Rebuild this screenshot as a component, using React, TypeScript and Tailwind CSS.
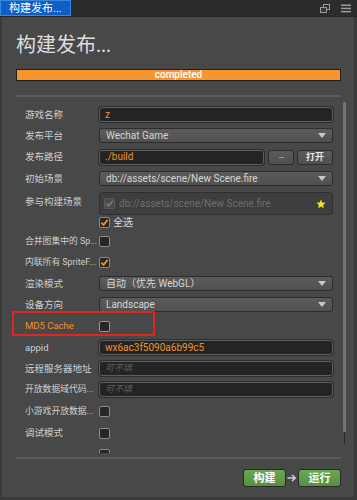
import React from "react";

const font = { fontFamily: 'Roboto, "Noto Sans CJK SC", sans-serif' };

function Label({ children, orange, small }: { children: React.ReactNode; orange?: boolean; small?: boolean }) {
  return (
    <div
      className={`w-[74px] shrink-0 whitespace-nowrap leading-none ${small ? "text-[8.8px]" : "text-[9.5px]"} ${
        orange ? "text-[#f0922a]" : "text-[#cfcfcf]"
      }`}
    >
      {children}
    </div>
  );
}

function TextInput({ value, placeholder, className = "" }: { value?: string; placeholder?: string; className?: string }) {
  return (
    <div
      className={`h-[15px] rounded-[3px] border border-[#5e5e5e] bg-[#242424] shadow-[0_0_0_1px_#2e2e2e] flex items-center px-[5px] text-[10px] leading-none ${className}`}
    >
      {value ? (
        <span className="text-[#f0922a]">{value}</span>
      ) : (
        <span className="text-[#5f5f5f] italic text-[9px]">{placeholder}</span>
      )}
    </div>
  );
}

function Select({ value }: { value: string }) {
  return (
    <div className="h-[15px] w-[234px] rounded-[3px] border border-[#2c2c2c] bg-gradient-to-b from-[#5b5b5b] to-[#505050] flex items-center justify-between pl-[6px] pr-[6px] text-[10px] leading-none text-[#d6d6d6]">
      <span>{value}</span>
      <span className="w-0 h-0 border-l-[4px] border-r-[4px] border-t-[5px] border-l-transparent border-r-transparent border-t-[#c8c8c8]" />
    </div>
  );
}

function Check({ checked, disabled }: { checked?: boolean; disabled?: boolean }) {
  return (
    <div
      className={`w-[11px] h-[11px] rounded-[2px] border flex items-center justify-center ${
        disabled ? "border-[#5a5a5a] bg-[#4a4a4a]" : "border-[#8a8a8a] bg-[#262626]"
      }`}
    >
      {checked && (
        <svg width="9" height="9" viewBox="0 0 10 10">
          <path
            d="M1.5 5.2 L4 7.6 L8.6 2"
            fill="none"
            stroke={disabled ? "#7a7a7a" : "#f0922a"}
            strokeWidth="2"
          />
        </svg>
      )}
    </div>
  );
}

function Row({ h, children }: { h: string; children: React.ReactNode }) {
  return <div className={`${h} flex items-center shrink-0`}>{children}</div>;
}

export default function App() {
  return (
    <div className="w-[357px] h-[500px] bg-[#2c2c2c] flex flex-col overflow-hidden" style={font}>
      {/* tab bar */}
      <div className="h-[17px] shrink-0 flex items-stretch border-b border-[#252525]">
        <div className="w-[71px] bg-[#0d5ec6] border border-[#3a86e0] text-white text-[11px] leading-none flex items-center pl-[8px]">
          构建发布...
        </div>
        <div className="flex-1" />
        <div className="flex items-center gap-[11px] pr-[6px]">
          <svg width="10" height="9" viewBox="0 0 10 9">
            <rect x="3.5" y="0.5" width="6" height="5" fill="none" stroke="#9a9a9a" />
            <rect x="0.5" y="3.5" width="6" height="5" fill="#3a3a3a" stroke="#9a9a9a" />
          </svg>
          <svg width="10" height="9" viewBox="0 0 10 9">
            <rect x="0" y="0.5" width="10" height="1.5" fill="#9a9a9a" />
            <rect x="0" y="3.7" width="10" height="1.5" fill="#9a9a9a" />
            <rect x="0" y="6.9" width="10" height="1.5" fill="#9a9a9a" />
          </svg>
        </div>
      </div>

      {/* panel */}
      <div className="flex-1 flex flex-col bg-[#484848] border-l-2 border-r-[3px] border-b-[3px] border-[#3a3a3a] min-h-0">
        <div
          className="pl-[14px] pt-[15px] h-[52px] text-[20px] leading-[24px] text-[#dedede] shrink-0"
          style={{ fontFamily: '"Noto Sans CJK SC", sans-serif' }}
        >
          构建发布<span style={{ fontFamily: '"Liberation Serif", serif' }}>...</span>
        </div>

        <div className="ml-[14px] w-[325px] h-[12px] border border-[#1e1e1e] bg-[#f7962f] flex items-center justify-center text-white text-[10px] leading-none font-medium shrink-0">
          completed
        </div>

        <div className="ml-[14px] w-[325px] h-[2px] bg-[#5b5b5b] mt-[14px] shrink-0" />

        {/* scroll area */}
        <div className="h-[356px] flex shrink-0 overflow-hidden relative">
          <div className="flex flex-col pl-[23px] pt-[7px] w-[334px]">
            <Row h="h-[21px]">
              <Label>游戏名称</Label>
              <TextInput value="z" className="w-[234px]" />
            </Row>
            <Row h="h-[21px]">
              <Label>发布平台</Label>
              <Select value="Wechat Game" />
            </Row>
            <Row h="h-[22px]">
              <Label>发布路径</Label>
              <TextInput value="./build" className="w-[165px]" />
              <div className="ml-[4px] w-[26px] h-[15px] rounded-[3px] border border-[#2c2c2c] bg-gradient-to-b from-[#5b5b5b] to-[#505050] flex items-center justify-center">
                <div className="w-[5px] h-[1px] bg-[#9a9a9a]" />
              </div>
              <div className="ml-[3px] w-[36px] h-[15px] rounded-[3px] border border-[#2c2c2c] bg-gradient-to-b from-[#5b5b5b] to-[#505050] flex items-center justify-center text-[9px] leading-none text-[#e8e8e8] font-bold">
                打开
              </div>
            </Row>
            <Row h="h-[21px]">
              <Label>初始场景</Label>
              <Select value="db://assets/scene/New Scene.fire" />
            </Row>
            <div className="h-[26px] flex items-start shrink-0 pt-[3px]">
              <div className="pt-[5px]">
                <Label>参与构建场景</Label>
              </div>
              <div className="w-[234px] h-[23px] rounded-[3px] border border-[#2f2f2f] bg-[#3e3e3e] flex items-center pl-[4px] pr-[6px]">
                <Check checked disabled />
                <span className="ml-[4px] text-[10px] leading-none text-[#6e6e6e]">db://assets/scene/New Scene.fire</span>
                <div className="flex-1" />
                <svg width="10" height="10" viewBox="0 0 10 10">
                  <path
                    d="M5 0.4 L6.3 3.5 L9.6 3.7 L7.1 5.9 L7.9 9.3 L5 7.5 L2.1 9.3 L2.9 5.9 L0.4 3.7 L3.7 3.5 Z"
                    fill="#f5e21a"
                  />
                </svg>
              </div>
            </div>
            <Row h="h-[15px]">
              <div className="w-[74px]" />
              <Check checked />
              <span className="ml-[3px] text-[10px] leading-none text-[#dcdcdc]">全选</span>
            </Row>
            <Row h="h-[22px]">
              <Label small>合并图集中的 Sp...</Label>
              <Check />
            </Row>
            <Row h="h-[21px]">
              <Label small>内联所有 SpriteF...</Label>
              <Check checked />
            </Row>
            <Row h="h-[21px]">
              <Label>渲染模式</Label>
              <Select value="自动（优先 WebGL）" />
            </Row>
            <Row h="h-[21px]">
              <Label>设备方向</Label>
              <Select value="Landscape" />
            </Row>
            <div className="h-[22px] flex items-center shrink-0 relative">
              <Label orange>MD5 Cache</Label>
              <div className="w-[11px] h-[11px] rounded-[2px] border border-[#d08a3a] bg-[#262626]" />
              <div className="absolute left-[-13px] top-[-4px] w-[143px] h-[25px] border-2 border-[#e0271f]" />
            </div>
            <Row h="h-[21px]">
              <Label>appid</Label>
              <TextInput value="wx6ac3f5090a6b99c5" className="w-[234px]" />
            </Row>
            <Row h="h-[21px]">
              <Label>远程服务器地址</Label>
              <TextInput placeholder="可不填" className="w-[234px]" />
            </Row>
            <Row h="h-[21px]">
              <Label small>开放数据域代码...</Label>
              <TextInput placeholder="可不填" className="w-[234px]" />
            </Row>
            <Row h="h-[22px]">
              <Label small>小游戏开放数据...</Label>
              <Check />
            </Row>
            <Row h="h-[22px]">
              <Label>调试模式</Label>
              <Check />
            </Row>
            <Row h="h-[22px]">
              <div className="w-[74px]" />
              <div className="self-start mt-[5px]">
                <Check />
              </div>
            </Row>
          </div>
          {/* scrollbar */}
          <div className="ml-[7px] flex flex-col pt-[5px]">
            <div className="w-[3px] h-[330px] bg-[#737373] rounded-[1px]" />
            <div className="w-[1px] ml-[1px] h-[12px] bg-[#2a2a2a]" />
          </div>
        </div>

        <div className="ml-[14px] w-[325px] h-[2px] bg-[#5b5b5b] mt-[4px] shrink-0" />

        <div className="flex items-center justify-end pr-[13px] mt-[10px] shrink-0">
          <div className="w-[43px] h-[18px] rounded-[3px] border border-[#2a2a2a] bg-gradient-to-b from-[#6aa751] to-[#578f43] flex items-center justify-center text-white text-[11px] leading-none font-bold">
            构建
          </div>
          <svg width="12" height="10" viewBox="0 0 12 10">
            <path d="M1.5 5 H9 M6 2 L9.2 5 L6 8" fill="none" stroke="#cfcfcf" strokeWidth="1.6" />
          </svg>
          <div className="w-[43px] h-[18px] rounded-[3px] border border-[#2a2a2a] bg-gradient-to-b from-[#6aa751] to-[#578f43] flex items-center justify-center text-white text-[11px] leading-none font-bold">
            运行
          </div>
        </div>
      </div>
    </div>
  );
}
